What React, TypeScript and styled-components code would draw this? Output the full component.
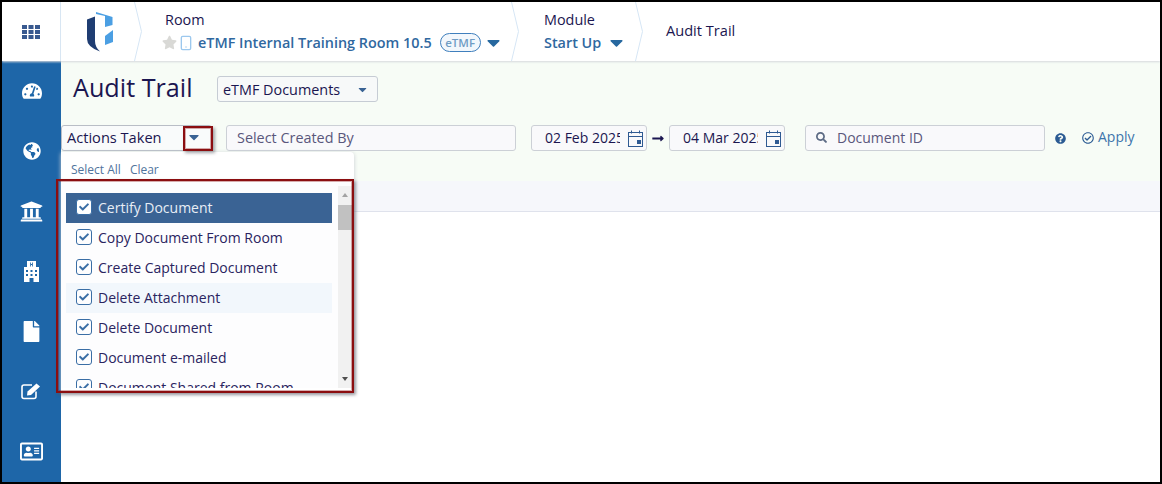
import { createGlobalStyle, styled } from 'styled-components';
import {
  FaCaretDown,
  FaCheck,
  FaFile,
  FaGlobeAmericas,
  FaLongArrowAltRight,
  FaQuestionCircle,
  FaRegAddressCard,
  FaRegCheckCircle,
  FaSearch,
  FaStar,
  FaTachometerAlt,
  FaUniversity,
} from 'react-icons/fa';
import { FiSmartphone } from 'react-icons/fi';

const GlobalStyle = createGlobalStyle`
  html, body {
    margin: 0;
    padding: 0;
    background: #000;
  }
  body {
    font-family: "Open Sans", "Noto Sans", sans-serif;
    color: #1b1650;
  }
  * {
    box-sizing: border-box;
  }
`;

const Frame = styled.div`
  width: 1162px;
  height: 484px;
  border: 2px solid #000;
  background: #fff;
  display: flex;
  flex-direction: column;
  overflow: hidden;
`;

const TopBar = styled.header`
  display: flex;
  flex: none;
  height: 59px;
  background: #fff;
  box-shadow: 0 1px 2px #d5d8dc;
  z-index: 2;
`;

const GridCell = styled.div`
  display: flex;
  align-items: center;
  justify-content: center;
  width: 59px;
  flex: none;
  border-right: 1px solid #d8e6f3;
`;

const Crumb = styled.div<{ $width: number; $pad: number }>`
  position: relative;
  flex: none;
  width: ${(p) => p.$width}px;
  height: 100%;
  display: flex;
  flex-direction: column;
  justify-content: center;
  padding-left: ${(p) => p.$pad}px;
`;

const Chevron = styled.svg`
  position: absolute;
  top: 0;
  right: -8px;
  width: 8px;
  height: 59px;
`;

const CrumbLabel = styled.div`
  font-size: 14.4px;
  line-height: 20px;
  font-weight: 500;
`;

const CrumbValue = styled.div`
  display: flex;
  align-items: center;
  margin-top: 2px;
  font-size: 14.4px;
  line-height: 20px;
  font-weight: 600;
  color: #30689f;
  white-space: nowrap;
`;

const RoomValue = styled(CrumbValue)`
  margin-left: -3px;
`;

const StarIcon = styled(FaStar)`
  color: #d9d9d6;
  font-size: 15px;
`;

const PhoneIcon = styled(FiSmartphone)`
  color: #9cc8ee;
  font-size: 16px;
  margin: 0 4px 0 1px;
`;

const Pill = styled.span`
  margin-left: 8px;
  height: 19px;
  width: 41px;
  border: 1px solid #3f7fbd;
  border-radius: 10px;
  background: #f2f7fc;
  color: #6f9cc4;
  font-size: 11.5px;
  line-height: 17px;
  text-align: center;
`;

const DownIcon = styled(FaCaretDown)<{ $gap: number }>`
  color: #27689f;
  font-size: 21px;
  margin-left: ${(p) => p.$gap}px;
`;

const CrumbTitle = styled.div`
  font-size: 14.6px;
  font-weight: 500;
  padding-bottom: 3px;
`;

const Body = styled.div`
  flex: 1;
  display: flex;
  min-height: 0;
`;

const Sidebar = styled.nav`
  width: 59px;
  flex: none;
  background: #1e66a8;
  color: #fff;
  display: flex;
  flex-direction: column;
  align-items: center;
`;

const SideItem = styled.div<{ $size: number }>`
  height: 60px;
  width: 100%;
  flex: none;
  display: flex;
  align-items: center;
  justify-content: center;
  font-size: ${(p) => p.$size}px;
`;

const Main = styled.main`
  flex: 1;
  display: flex;
  flex-direction: column;
  min-width: 0;
`;

const FilterPanel = styled.section`
  height: 120px;
  flex: none;
  background: #f7fcf6;
  padding-top: 12px;
`;

const TitleRow = styled.div`
  display: flex;
  align-items: center;
  height: 28px;
  padding-left: 12px;
`;

const PageTitle = styled.h1`
  margin: 0;
  font-size: 25.2px;
  line-height: 28px;
  font-weight: 500;
  width: 144px;
  flex: none;
`;

const ModuleSelect = styled.div`
  display: flex;
  align-items: center;
  justify-content: space-between;
  width: 161px;
  height: 26px;
  margin-top: 4px;
  padding: 0 8px 0 5px;
  border: 1px solid #c6ccd4;
  border-radius: 3px;
  background: #f7f9f9;
  font-size: 14.4px;
  font-weight: 500;
`;

const SmallDown = styled(FaCaretDown)`
  color: #3a6394;
  font-size: 13px;
`;

const ActionsDown = styled(SmallDown)`
  font-size: 16px;
`;

const FilterRow = styled.div`
  display: flex;
  align-items: center;
  margin-top: 24px;
  height: 26px;
  font-size: 14px;
`;

const ActionsWrap = styled.div`
  position: relative;
  width: 151px;
  flex: none;
  margin-right: 14px;
`;

const ActionsSelect = styled.div`
  display: flex;
  align-items: center;
  justify-content: space-between;
  height: 26px;
  padding: 0 9px 2px 5px;
  border: 1px solid #b9bec6;
  border-radius: 3px;
  background: #f9fbfb;
  font-size: 14.6px;
  font-weight: 500;
`;

const Field = styled.div<{ $width: number }>`
  display: flex;
  align-items: center;
  width: ${(p) => p.$width}px;
  height: 26px;
  flex: none;
  padding-bottom: 2px;
  border: 1px solid #ccd0d6;
  border-radius: 3px;
  background: #f9f9fb;
  color: #59577c;
  overflow: hidden;
  white-space: nowrap;
`;

const CreatedBy = styled(Field)`
  padding-left: 10px;
  font-size: 14.4px;
  font-weight: 500;
  margin-right: 15px;
`;

const DateText = styled.span`
  flex: 1;
  min-width: 0;
  overflow: hidden;
  padding-left: 13px;
  color: #1b1650;
`;

const CalendarIcon = styled.svg`
  flex: none;
  width: 15px;
  height: 17px;
  margin: 2px 3px 0 8px;
`;

const ArrowIcon = styled(FaLongArrowAltRight)`
  flex: none;
  width: 22px;
  font-size: 13px;
  color: #1b1650;
`;

const SearchField = styled(Field)`
  margin-left: 20px;
  padding-left: 10px;
  gap: 10px;
`;

const SearchIcon = styled(FaSearch)`
  color: #5d6b85;
  font-size: 11px;
`;

const HelpIcon = styled(FaQuestionCircle)`
  color: #2b5b93;
  font-size: 11px;
  margin-left: 10px;
`;

const ApplyButton = styled.div`
  display: flex;
  align-items: center;
  gap: 4px;
  margin: 0 0 3px 16px;
  color: #3d75ac;
`;

const ApplyCheck = styled(FaRegCheckCircle)`
  color: #2b5b93;
  font-size: 12px;
  margin-top: 3px;
`;

const Band = styled.div`
  height: 31px;
  flex: none;
  background: #f6f7fb;
  border-bottom: 1px solid #dfe2ec;
`;

const Dropdown = styled.div`
  position: absolute;
  top: 27px;
  left: 0;
  width: 293px;
  height: 240px;
  background: #fff;
  border-radius: 0 4px 0 0;
  box-shadow: 0 1px 4px #c8ccd2;
  z-index: 3;
`;

const DropdownActions = styled.div`
  display: flex;
  gap: 9px;
  height: 30px;
  padding: 10px 0 0 10px;
  font-size: 12px;
  line-height: 16px;
  color: #50739c;
`;

const ListBox = styled.div`
  position: relative;
  height: 206px;
  padding: 11px 0 0 5px;
  overflow: hidden;
  background: #fdfdfe;
`;

const OptionRow = styled.div<{ $state?: 'selected' | 'hover' }>`
  display: flex;
  align-items: center;
  gap: 6px;
  width: 266px;
  height: 30px;
  padding: 0 0 2px 10px;
  font-size: 14px;
  white-space: nowrap;
  color: ${(p) => (p.$state === 'selected' ? '#e8eef6' : '#2a2460')};
  background: ${(p) =>
    p.$state === 'selected' ? '#3a6394' : p.$state === 'hover' ? '#f2f7fc' : 'transparent'};
`;

const CheckBox = styled.span<{ $solid?: boolean }>`
  display: flex;
  align-items: center;
  justify-content: center;
  width: 16px;
  height: 16px;
  margin-top: -1px;
  flex: none;
  border: 1px solid #3a6ea5;
  border-radius: 3px;
  background: ${(p) => (p.$solid ? '#fff' : '#fdfdfe')};
  color: #3a6ea5;
  font-size: 10px;
`;

const ScrollTrack = styled.div`
  position: absolute;
  top: 4px;
  right: 1px;
  width: 15px;
  height: 202px;
  background: #f1f1f1;
`;

const ScrollThumb = styled.div`
  position: absolute;
  top: 19px;
  left: 0;
  width: 100%;
  height: 25px;
  background: #c1c1c1;
`;

const ScrollArrow = styled.span<{ $down?: boolean }>`
  position: absolute;
  left: 4px;
  ${(p) => (p.$down ? 'bottom: 7px;' : 'top: 7px;')}
  width: 0;
  height: 0;
  border-left: 3.5px solid transparent;
  border-right: 3.5px solid transparent;
  ${(p) => (p.$down ? 'border-top: 4px solid #505050;' : 'border-bottom: 4px solid #a3a3a3;')}
`;

const Callout = styled.div`
  position: absolute;
  border: 2px solid #8b0e10;
  box-shadow:
    inset 0 0 0 1px rgba(139, 14, 16, 0.35),
    2px 2px 3px rgba(60, 60, 70, 0.45);
  pointer-events: none;
  z-index: 4;
`;

const ArrowCallout = styled(Callout)`
  top: 1px;
  left: 122px;
  width: 30px;
  height: 25px;
`;

const ListCallout = styled(Callout)`
  top: 54px;
  left: -5px;
  width: 298px;
  height: 214px;
`;

const Content = styled.div`
  flex: 1;
  background: #fff;
`;

const ITEMS = [
  'Certify Document',
  'Copy Document From Room',
  'Create Captured Document',
  'Delete Attachment',
  'Delete Document',
  'Document e-mailed',
  'Document Shared from Room',
];

const crumbChevron = (
  <Chevron viewBox="0 0 8 59">
    <path d="M0.5 0 L7.5 29.5 L0.5 59" fill="none" stroke="#d6e6f5" strokeWidth="1" />
  </Chevron>
);

const calendar = (
  <CalendarIcon viewBox="0 0 15 17">
    <rect x="0.5" y="2.5" width="14" height="14" fill="none" stroke="#2f5a92" />
    <path d="M0.5 6.5 H14.5 M3.5 0.5 V3.5 M11.5 0.5 V3.5" stroke="#2f5a92" />
    <rect x="9" y="10" width="4" height="4" fill="#2f5a92" />
  </CalendarIcon>
);

const GridIcon = () => (
  <svg width="18" height="14" viewBox="0 0 18 14" fill="#38598f">
    {[0, 5, 10].map((y) =>
      [0, 6.5, 13].map((x) => <rect key={`${x}-${y}`} x={x} y={y} width="5" height="4" />),
    )}
  </svg>
);

const Logo = () => (
  <svg width="26" height="42" viewBox="0 0 26 42">
    <path d="M0 8.5 L8 5.5 V30 Q8 36 13 40.5 Q0 36 0 28 Z" fill="#1f3d72" />
    <path d="M9 1 L25.5 6 V14 L18 16 V5 L9 3 Z" fill="#4b9fe3" />
    <path d="M18 25 L26 19 V31 L18 34 Z" fill="#4b9fe3" />
  </svg>
);

const HospitalIcon = () => (
  <svg width="17" height="21" viewBox="0 0 17 21" fill="#fff">
    <path
      fillRule="evenodd"
      d="M4 0 H13 V6 H16 V21 H1 V6 H4 Z M7.2 1.5 V5.5 H8 V4 H9 V5.5 H9.8 V1.5 H9 V3 H8 V1.5 Z M3 9 V11 H5 V9 Z M7.5 9 V11 H9.5 V9 Z M12 9 V11 H14 V9 Z M3 13 V15 H5 V13 Z M7.5 13 V15 H9.5 V13 Z M12 13 V15 H14 V13 Z M6.5 17 V21 H10.5 V17 Z"
    />
  </svg>
);

const EditIcon = () => (
  <svg width="21" height="18" viewBox="0 0 21 18">
    <path
      d="M15 9.5 V14.5 Q15 16.5 13 16.5 H3 Q1 16.5 1 14.5 V5 Q1 3 3 3 H11"
      fill="none"
      stroke="#fff"
      strokeWidth="1.6"
    />
    <path d="M6.5 9.5 L15.5 1.5 L19 4.5 L10 13 L6 13.5 Z" fill="#fff" />
  </svg>
);

export default function App() {
  return (
    <>
      <GlobalStyle />
      <Frame>
        <TopBar>
          <GridCell>
            <GridIcon />
          </GridCell>
          <Crumb $width={73} $pad={26}>
            <Logo />
            {crumbChevron}
          </Crumb>
          <Crumb $width={377} $pad={31}>
            <CrumbLabel>Room</CrumbLabel>
            <RoomValue>
              <StarIcon />
              <PhoneIcon />
              eTMF Internal Training Room 10.5
              <Pill>eTMF</Pill>
              <DownIcon $gap={2} />
            </RoomValue>
            {crumbChevron}
          </Crumb>
          <Crumb $width={124} $pad={33}>
            <CrumbLabel>Module</CrumbLabel>
            <CrumbValue>
              Start Up
              <DownIcon $gap={5} />
            </CrumbValue>
            {crumbChevron}
          </Crumb>
          <Crumb $width={200} $pad={31}>
            <CrumbTitle>Audit Trail</CrumbTitle>
          </Crumb>
        </TopBar>
        <Body>
          <Sidebar>
            <SideItem $size={20}><FaTachometerAlt /></SideItem>
            <SideItem $size={18}><FaGlobeAmericas /></SideItem>
            <SideItem $size={23}><FaUniversity /></SideItem>
            <SideItem $size={20}><HospitalIcon /></SideItem>
            <SideItem $size={21}><FaFile /></SideItem>
            <SideItem $size={20}><EditIcon /></SideItem>
            <SideItem $size={23}><FaRegAddressCard /></SideItem>
          </Sidebar>
          <Main>
            <FilterPanel>
              <TitleRow>
                <PageTitle>Audit Trail</PageTitle>
                <ModuleSelect>
                  eTMF Documents
                  <SmallDown />
                </ModuleSelect>
              </TitleRow>
              <FilterRow>
                <ActionsWrap>
                  <ActionsSelect>
                    Actions Taken
                    <ActionsDown />
                  </ActionsSelect>
                  <ArrowCallout />
                  <Dropdown>
                    <DropdownActions>
                      <span>Select All</span>
                      <span>Clear</span>
                    </DropdownActions>
                    <ListBox>
                      {ITEMS.map((item, i) => (
                        <OptionRow
                          key={item}
                          $state={i === 0 ? 'selected' : i === 3 ? 'hover' : undefined}
                        >
                          <CheckBox $solid={i === 0}>
                            <FaCheck />
                          </CheckBox>
                          {item}
                        </OptionRow>
                      ))}
                      <ScrollTrack>
                        <ScrollArrow />
                        <ScrollThumb />
                        <ScrollArrow $down />
                      </ScrollTrack>
                    </ListBox>
                  </Dropdown>
                  <ListCallout />
                </ActionsWrap>
                <CreatedBy $width={290}>Select Created By</CreatedBy>
                <Field $width={116}>
                  <DateText>02 Feb 2025</DateText>
                  {calendar}
                </Field>
                <ArrowIcon />
                <Field $width={116}>
                  <DateText>04 Mar 2025</DateText>
                  {calendar}
                </Field>
                <SearchField $width={240}>
                  <SearchIcon />
                  Document ID
                </SearchField>
                <HelpIcon />
                <ApplyButton>
                  <ApplyCheck />
                  Apply
                </ApplyButton>
              </FilterRow>
            </FilterPanel>
            <Band />
            <Content />
          </Main>
        </Body>
      </Frame>
    </>
  );
}
